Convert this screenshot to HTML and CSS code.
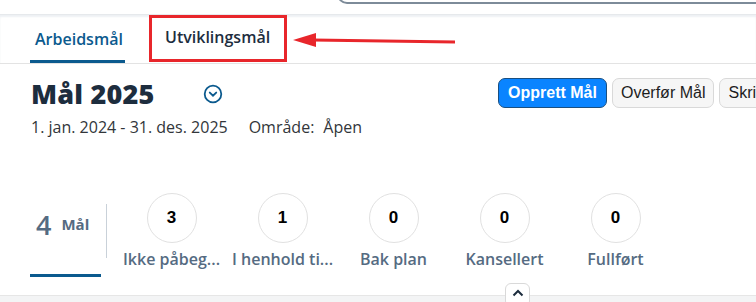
FILE: index.html
```html
<!DOCTYPE html>
<html lang="no">
<head>
  <meta charset="UTF-8">
  <title>Mål 2025</title>
  <link rel="stylesheet" href="styles.css">
</head>
<body>
  <div class="page">
    <div class="shellbar">
      <div class="search"></div>
    </div>
    <div class="tabs">
      <div class="tab active">Arbeidsmål</div>
      <div class="tab marked">Utviklingsmål</div>
      <svg class="arrow" width="170" height="16" viewBox="0 0 170 16">
        <path d="M20 7 L162 9" stroke="#e8262b" stroke-width="3" fill="none"/>
        <path d="M0 7 L23 0 L23 14 Z" fill="#e8262b"/>
      </svg>
    </div>
    <div class="header">
      <div class="title-block">
        <div class="title-row">
          <h1>Mål 2025</h1>
          <svg class="toggle" width="20" height="20" viewBox="0 0 20 20">
            <circle cx="10" cy="10" r="8.3" stroke="#0b5a8e" stroke-width="1.8" fill="none"/>
            <path d="M6.8 8.6 L10 11.6 L13.2 8.6" stroke="#0b5a8e" stroke-width="1.9" fill="none" stroke-linecap="round"/>
          </svg>
        </div>
        <div class="meta">
          <span>1. jan. 2024 - 31. des. 2025</span>
          <span class="area">Område:</span>
          <span class="value">Åpen</span>
        </div>
      </div>
      <div class="actions">
        <button class="btn primary">Opprett Mål</button>
        <button class="btn">Overfør Mål</button>
        <button class="btn">Skriv ut</button>
      </div>
    </div>
    <div class="stats">
      <div class="total">
        <span class="count">4</span>
        <span class="unit">Mål</span>
      </div>
      <div class="sep"></div>
      <div class="stat"><div class="circle">3</div><div class="label">Ikke påbeg...</div></div>
      <div class="stat"><div class="circle">1</div><div class="label">I henhold ti...</div></div>
      <div class="stat"><div class="circle">0</div><div class="label">Bak plan</div></div>
      <div class="stat"><div class="circle">0</div><div class="label">Kansellert</div></div>
      <div class="stat"><div class="circle">0</div><div class="label">Fullført</div></div>
    </div>
    <div class="footer">
      <div class="collapse">
        <svg width="14" height="10" viewBox="0 0 14 10">
          <path d="M2.5 7.5 L7 3 L11.5 7.5" stroke="#1d2d3e" stroke-width="2" fill="none"/>
        </svg>
      </div>
    </div>
  </div>
</body>
</html>
```
FILE: styles.css
```css
body {
  margin: 0;
  font-family: "Open Sans", "Liberation Sans", sans-serif;
  background: #fff;
  color: #1d2d3e;
  overflow: hidden;
}
.page {
  width: 756px;
  height: 302px;
  overflow: hidden;
  position: relative;
}
.shellbar {
  height: 14px;
  display: flex;
}
.search {
  margin-left: 337px;
  flex: 1;
  height: 2px;
  border-left: 2px solid #7d8b99;
  border-bottom: 2px solid #7d8b99;
  border-bottom-left-radius: 12px;
  margin-top: -6px;
  padding-top: 6px;
}
.tabs {
  position: relative;
  height: 50px;
  display: flex;
  align-items: stretch;
  padding-left: 30px;
  border-top: 1px solid #e6e9ec;
  border-bottom: 1px solid #e3e3e3;
  box-shadow: inset 0 2px 2px #eef1f4;
  box-sizing: border-box;
}
.tab {
  font-size: 16px;
  font-weight: 600;
  display: flex;
  align-items: center;
  padding: 0 5px;
  margin-right: 24px;
  box-sizing: border-box;
  white-space: nowrap;
}
.tab.active {
  color: #0b5a8e;
  border-bottom: 3px solid #0b5a8e;
  padding-top: 3px;
  width: 95px;
}
.tab.marked {
  border: 3px solid #e8262b;
  height: 47px;
  padding: 0 0 3px 13px;
  color: #1d2d3e;
  width: 138px;
}
.arrow {
  position: absolute;
  left: 293px;
  top: 18px;
}
.header {
  display: flex;
  padding: 14px 0 0 31px;
  height: 112px;
  box-sizing: border-box;
}
.title-block {
  width: 467px;
  flex-shrink: 0;
}
.title-row {
  display: flex;
  align-items: center;
  height: 30px;
}
h1 {
  margin: 0;
  font-size: 27px;
  font-weight: 800;
  letter-spacing: 0.2px;
  width: 172px;
}
.toggle {
  margin-top: 1px;
}
.meta {
  margin-top: 8px;
  font-size: 16px;
  color: #32363a;
  display: flex;
}
.area {
  margin-left: 21px;
}
.value {
  margin-left: 9px;
}
.actions {
  display: flex;
  gap: 5px;
  white-space: nowrap;
}
.btn {
  font-family: "Liberation Sans", Arial, sans-serif;
  font-size: 16px;
  height: 30px;
  padding: 0 8px;
  border: 1px solid #d9d9d9;
  border-radius: 7px;
  background: #f6f6f6;
  color: #1d1d1d;
  flex-shrink: 0;
}
.btn.primary {
  background: #0a84ff;
  border-color: #1a4f80;
  color: #fff;
  font-weight: bold;
  width: 109px;
}
.stats {
  display: flex;
  align-items: flex-start;
  padding-left: 30px;
  height: 119px;
  box-sizing: border-box;
  padding-top: 17px;
}
.total {
  width: 71px;
  height: 84px;
  border-bottom: 3px solid #0b5a8e;
  display: flex;
  align-items: flex-start;
  color: #556b82;
  padding: 13px 0 0 6px;
  box-sizing: border-box;
}
.count {
  font-size: 27px;
  font-weight: 600;
}
.unit {
  font-size: 15px;
  font-weight: 700;
  margin: 8px 0 0 10px;
}
.sep {
  width: 1px;
  height: 54px;
  background: #c9d1d9;
  margin: 11px 9px 0 5px;
}
.stat {
  width: 111px;
  display: flex;
  flex-direction: column;
  align-items: center;
  flex-shrink: 0;
}
.circle {
  width: 50px;
  height: 50px;
  border: 1px solid #e1e1e1;
  border-radius: 50%;
  box-sizing: border-box;
  display: flex;
  align-items: center;
  justify-content: center;
  font-family: "Liberation Sans", Arial, sans-serif;
  font-size: 17px;
  font-weight: 700;
  color: #000;
}
.label {
  margin-top: 5px;
  font-size: 16px;
  font-weight: 600;
  color: #556b82;
  white-space: nowrap;
}
.footer {
  height: 20px;
  border-top: 1px solid #e6e6e6;
  background: #f3f4f5;
  display: flex;
}
.collapse {
  margin: -13px 0 0 505px;
  width: 25px;
  height: 24px;
  background: #fff;
  border: 1px solid #d9d9d9;
  border-radius: 6px;
  display: flex;
  justify-content: center;
  padding-top: 4px;
  box-sizing: border-box;
}
```
